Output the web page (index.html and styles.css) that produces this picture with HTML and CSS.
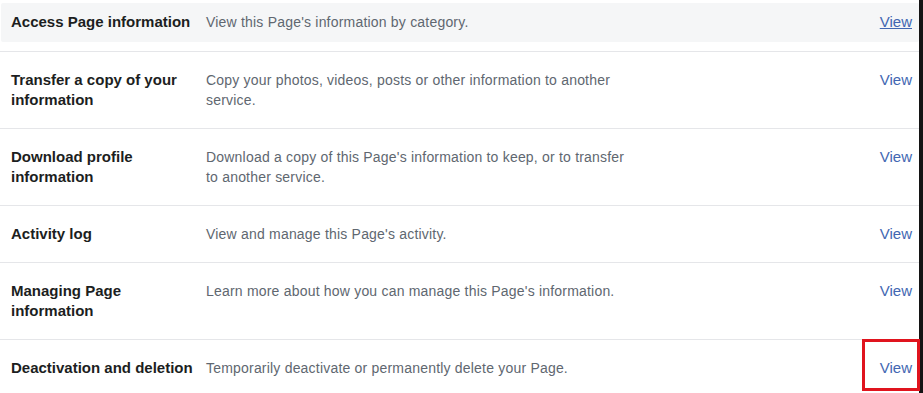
FILE: index.html
```html
<!DOCTYPE html>
<html lang="en">
<head>
<meta charset="utf-8">
<title>Your Page information</title>
<link rel="stylesheet" href="styles.css">
</head>
<body>
<div class="frame">
  <div class="list">
    <div class="row first">
      <div class="row-inner highlighted">
        <div class="label">Access Page information</div>
        <div class="desc">View this Page's information by category.</div>
        <a class="view underlined" href="#">View</a>
      </div>
    </div>
    <div class="row">
      <div class="row-inner">
        <div class="label">Transfer a copy of your information</div>
        <div class="desc">Copy your photos, videos, posts or other information to another service.</div>
        <a class="view" href="#">View</a>
      </div>
    </div>
    <div class="row">
      <div class="row-inner">
        <div class="label">Download profile information</div>
        <div class="desc">Download a copy of this Page's information to keep, or to transfer to another service.</div>
        <a class="view" href="#">View</a>
      </div>
    </div>
    <div class="row">
      <div class="row-inner">
        <div class="label">Activity log</div>
        <div class="desc">View and manage this Page's activity.</div>
        <a class="view" href="#">View</a>
      </div>
    </div>
    <div class="row">
      <div class="row-inner">
        <div class="label">Managing Page information</div>
        <div class="desc">Learn more about how you can manage this Page's information.</div>
        <a class="view" href="#">View</a>
      </div>
    </div>
    <div class="row last">
      <div class="row-inner">
        <div class="label">Deactivation and deletion</div>
        <div class="desc">Temporarily deactivate or permanently delete your Page.</div>
        <a class="view" href="#">View</a>
      </div>
      <div class="callout"></div>
    </div>
  </div>
  <div class="edge"></div>
</div>
</body>
</html>
```

FILE: styles.css
```css
html, body {
  margin: 0;
  padding: 0;
  background: #ffffff;
  overflow: hidden;
}

body {
  font-family: "Liberation Sans", Arial, Helvetica, sans-serif;
  font-size: 14px;
  line-height: 20px;
  color: #1c1e21;
}

.frame {
  display: flex;
  width: 923px;
  height: 393px;
}

.list {
  flex: 1;
  min-width: 0;
}

.edge {
  width: 4px;
  background: #141414;
}

.row {
  position: relative;
  padding: 9px 0 9px 1px;
  border-bottom: 1px solid #e5e6e9;
}

.row.first {
  padding-top: 3px;
}

.row.last {
  border-bottom: none;
}

.row-inner {
  display: flex;
  align-items: flex-start;
  padding: 9px 0 9px 10px;
  border-radius: 2px;
}

.row-inner.highlighted {
  background: #f5f6f7;
  padding-bottom: 10px;
}

.label {
  width: 185px;
  flex: none;
  font-size: 15px;
  font-weight: bold;
  color: #1c1e21;
}

.desc {
  width: 428px;
  flex: none;
  margin-left: 10px;
  color: #606770;
  letter-spacing: 0.2px;
}

.view {
  margin-left: auto;
  margin-right: 7px;
  color: #4267b2;
  text-decoration: none;
  font-size: 15px;
}

.view.underlined {
  text-decoration: underline;
}

.callout {
  position: absolute;
  left: 862px;
  top: -1px;
  width: 52px;
  height: 46px;
  border: 3px solid #e0141e;
  pointer-events: none;
}
```
